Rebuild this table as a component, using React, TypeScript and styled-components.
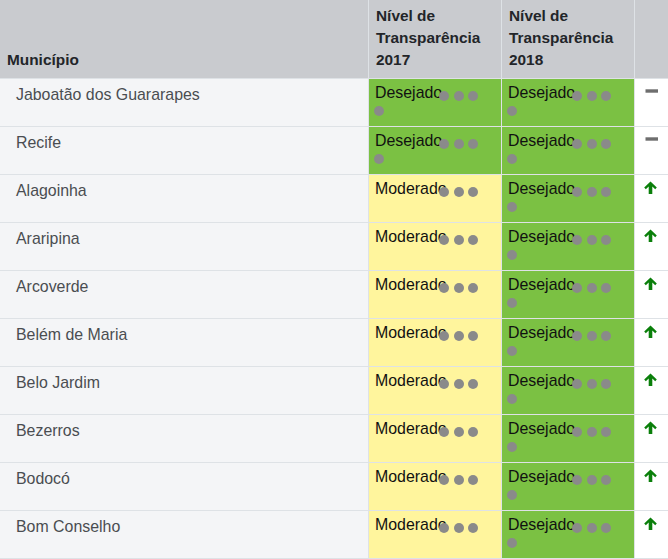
import React from "react";
import styled, { createGlobalStyle } from "styled-components";

const GlobalStyle = createGlobalStyle`
  html, body { margin: 0; padding: 0; background: #ffffff; }
  body { font-family: "Liberation Sans", Arial, sans-serif; }
`;

type Level = "Desejado" | "Moderado";
type Trend = "same" | "up";

interface Row {
  name: string;
  y2017: Level;
  y2018: Level;
  trend: Trend;
}

const rows: Row[] = [
  { name: "Jaboatão dos Guararapes", y2017: "Desejado", y2018: "Desejado", trend: "same" },
  { name: "Recife", y2017: "Desejado", y2018: "Desejado", trend: "same" },
  { name: "Alagoinha", y2017: "Moderado", y2018: "Desejado", trend: "up" },
  { name: "Araripina", y2017: "Moderado", y2018: "Desejado", trend: "up" },
  { name: "Arcoverde", y2017: "Moderado", y2018: "Desejado", trend: "up" },
  { name: "Belém de Maria", y2017: "Moderado", y2018: "Desejado", trend: "up" },
  { name: "Belo Jardim", y2017: "Moderado", y2018: "Desejado", trend: "up" },
  { name: "Bezerros", y2017: "Moderado", y2018: "Desejado", trend: "up" },
  { name: "Bodocó", y2017: "Moderado", y2018: "Desejado", trend: "up" },
  { name: "Bom Conselho", y2017: "Moderado", y2018: "Desejado", trend: "up" },
];

const Table = styled.div`
  display: grid;
  grid-template-columns: 368px 132px 132px 1fr;
  grid-template-rows: 78px repeat(10, 47px);
  gap: 1px;
  background: #dee2e6;
  padding-bottom: 1px;
  width: 668px;
  font-size: 15.4px;
  line-height: 22px;
`;

const HeadCell = styled.div`
  background: #c9cbcf;
  color: #222529;
  font-weight: bold;
  padding: 5px 6px 7px 7px;
  display: flex;
  align-items: flex-end;
`;

const NameCell = styled.div`
  background: #f4f5f7;
  color: #4a4d51;
  font-size: 15.9px;
  padding: 5px 16px 0 16px;
`;

const LevelCell = styled.div<{ $level: Level }>`
  position: relative;
  background: ${(p) => (p.$level === "Desejado" ? "#7bc143" : "#fff59d")};
  color: #111;
  font-size: 15.9px;
  padding: 3px 6px 0 6px;
`;

const Dots = styled.div`
  position: absolute;
  left: 70px;
  top: 11.7px;
  display: flex;
  gap: 4.5px;
`;

const Dot = styled.span`
  display: block;
  width: 10px;
  height: 10px;
  border-radius: 50%;
  background: #8a8a8a;
`;

const ExtraDot = styled(Dot)`
  position: absolute;
  left: 5px;
  top: 26.7px;
`;

const TrendCell = styled.div`
  background: #ffffff;
  padding: 6px 0 0 10px;
`;

const Icon = styled.svg`
  display: block;
  width: 13px;
  height: 13px;
`;

function LevelBox({ level }: { level: Level }) {
  return (
    <LevelCell $level={level}>
      {level}
      <Dots>
        <Dot />
        <Dot />
        <Dot />
      </Dots>
      {level === "Desejado" && <ExtraDot />}
    </LevelCell>
  );
}

function TrendIcon({ trend }: { trend: Trend }) {
  if (trend === "same") {
    return (
      <Icon viewBox="0 0 13 13">
        <rect x="0.5" y="4.3" width="12.5" height="3.4" fill="#6e6e6e" />
      </Icon>
    );
  }
  return (
    <Icon viewBox="0 0 13 13" style={{ marginLeft: -1 }}>
      <path
        d="M6.5 0.5 L12.8 6.6 L11.2 8.2 L8.3 5.4 L8.3 13 L4.7 13 L4.7 5.4 L1.8 8.2 L0.2 6.6 Z"
        fill="#0a7f0a"
      />
    </Icon>
  );
}

export default function App() {
  return (
    <>
      <GlobalStyle />
      <Table>
        <HeadCell>Município</HeadCell>
        <HeadCell>
          Nível de
          <br />
          Transparência
          <br />
          2017
        </HeadCell>
        <HeadCell>
          Nível de
          <br />
          Transparência
          <br />
          2018
        </HeadCell>
        <HeadCell />
        {rows.map((r) => (
          <React.Fragment key={r.name}>
            <NameCell>{r.name}</NameCell>
            <LevelBox level={r.y2017} />
            <LevelBox level={r.y2018} />
            <TrendCell>
              <TrendIcon trend={r.trend} />
            </TrendCell>
          </React.Fragment>
        ))}
      </Table>
    </>
  );
}
